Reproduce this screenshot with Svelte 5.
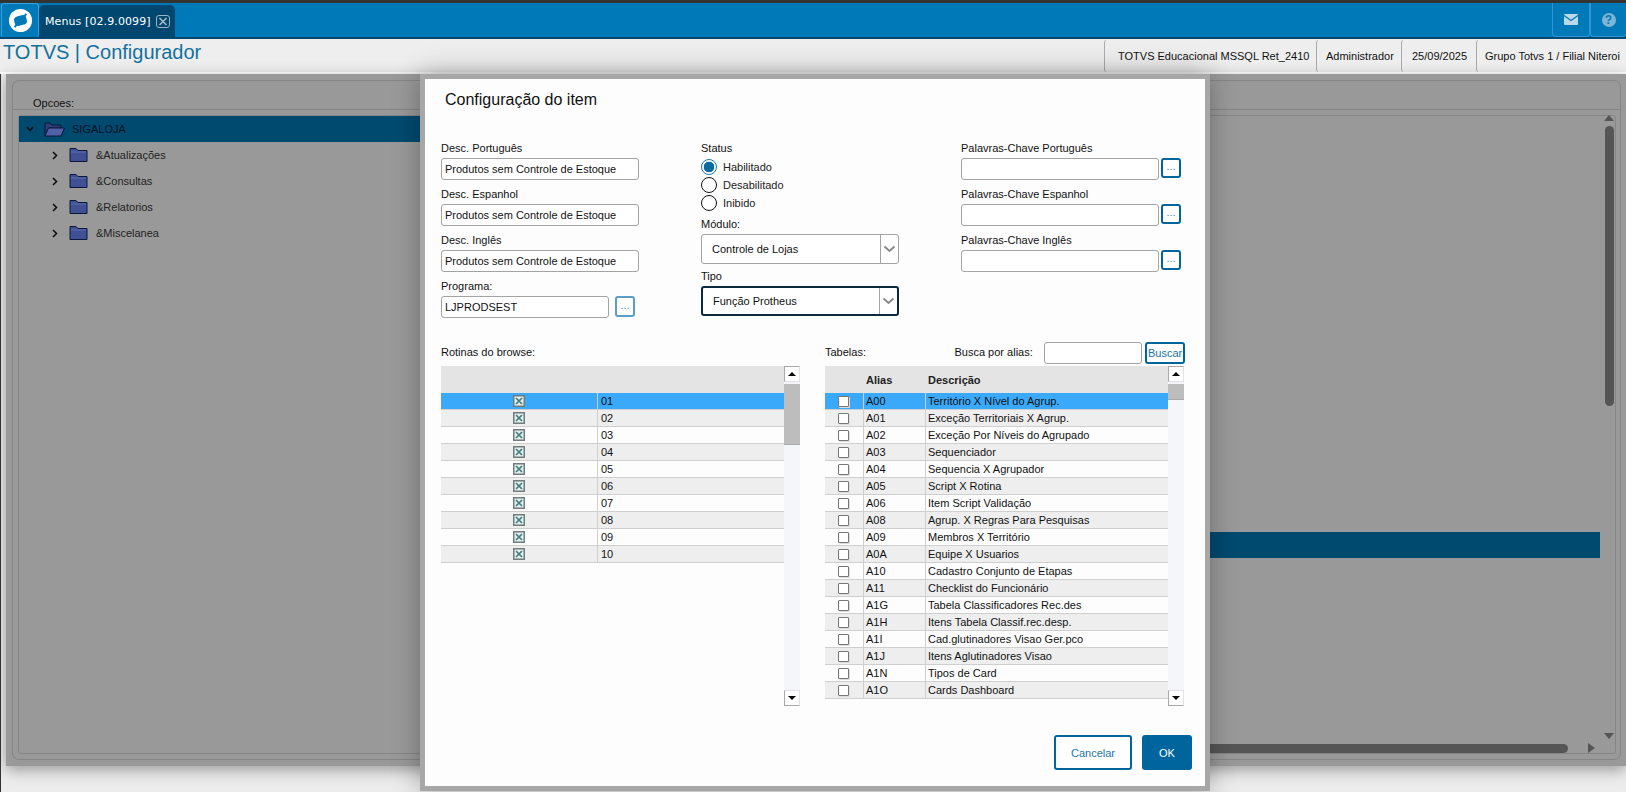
<script>
  const tree = ['&Atualizações', '&Consultas', '&Relatorios', '&Miscelanea'];
  const status = [
    { label: 'Habilitado', on: true },
    { label: 'Desabilitado', on: false },
    { label: 'Inibido', on: false }
  ];
  const descs = ['Desc. Português', 'Desc. Espanhol', 'Desc. Inglês'];
  const keys = ['Palavras-Chave Português', 'Palavras-Chave Espanhol', 'Palavras-Chave Inglês'];
  const rotinas = ['01', '02', '03', '04', '05', '06', '07', '08', '09', '10'];
  const tabelas = [
    ['A00', 'Território X Nível do Agrup.'],
    ['A01', 'Exceção Territoriais X Agrup.'],
    ['A02', 'Exceção Por Níveis do Agrupado'],
    ['A03', 'Sequenciador'],
    ['A04', 'Sequencia X Agrupador'],
    ['A05', 'Script X Rotina'],
    ['A06', 'Item Script Validação'],
    ['A08', 'Agrup. X Regras Para Pesquisas'],
    ['A09', 'Membros X Território'],
    ['A0A', 'Equipe X Usuarios'],
    ['A10', 'Cadastro Conjunto de Etapas'],
    ['A11', 'Checklist do Funcionário'],
    ['A1G', 'Tabela Classificadores Rec.des'],
    ['A1H', 'Itens Tabela Classif.rec.desp.'],
    ['A1I', 'Cad.glutinadores Visao Ger.pco'],
    ['A1J', 'Itens Aglutinadores Visao'],
    ['A1N', 'Tipos de Card'],
    ['A1O', 'Cards Dashboard']
  ];
</script>

<div class="page">
  <div class="topline"></div>
  <header class="topbar">
    <div class="logo">
      <svg width="25" height="25" viewBox="0 0 26 26">
        <circle cx="13" cy="13" r="12" fill="#fff" />
        <rect x="6.5" y="8" width="13" height="10" rx="4" fill="#0079b8" transform="rotate(-14 13 13)" />
        <path d="M17 9 L19 6 M9 17 L7 20" stroke="#0079b8" stroke-width="2" />
      </svg>
    </div>
    <div class="tab">
      <span>Menus [02.9.0099]</span>
      <svg class="tabclose" width="14" height="13" viewBox="0 0 14 13">
        <rect x="0.5" y="0.5" width="13" height="12" rx="2.5" fill="none" stroke="#9fb4c2" />
        <path d="M3.5 3 L10.5 10 M10.5 3 L3.5 10" stroke="#a9bac6" stroke-width="1.6" />
      </svg>
    </div>
    <div class="grow"></div>
    <div class="topbtn">
      <svg width="14" height="11" viewBox="0 0 14 11">
        <rect width="14" height="11" rx="1" fill="#bcd9ea" />
        <path d="M0 1.5 L7 6.5 L14 1.5" fill="none" stroke="#0079b8" stroke-width="1.3" />
      </svg>
    </div>
    <div class="topbtn last">
      <span class="help">?</span>
    </div>
  </header>

  <div class="infobar">
    <h1>TOTVS | Configurador</h1>
    <div class="seg first">TOTVS Educacional MSSQL Ret_2410</div>
    <div class="seg second">Administrador</div>
    <div class="seg third">25/09/2025</div>
    <div class="seg fourth">Grupo Totvs 1 / Filial Niteroi</div>
  </div>
  <div class="whitegap"></div>

  <main class="backdrop">
    <section class="panel">
      <div class="optlabel">Opcoes:</div>
      <div class="treebox">
        <div class="treerow selected">
          <svg class="chev" width="8" height="6" viewBox="0 0 8 6"><path d="M1 1 L4 4.5 L7 1" fill="none" stroke="#111" stroke-width="1.6" /></svg>
          <svg class="folder-open" width="21" height="15" viewBox="0 0 21 15">
            <path d="M1 14 V2 Q1 1 2 1 H6 L8 3 H17 V6 H5 Z" fill="#2f3d78" stroke="#0c1838" />
            <path d="M1 14 L4.5 6 H20.5 L17 14 Z" fill="#4f62a8" stroke="#0c1838" />
          </svg>
          <span class="rootname">SIGALOJA</span>
        </div>
        {#each tree as t}
          <div class="treerow">
            <svg class="chev child" width="6" height="9" viewBox="0 0 6 9"><path d="M1 1 L4.5 4.5 L1 8" fill="none" stroke="#111" stroke-width="1.6" /></svg>
            <svg class="folder" width="19" height="16" viewBox="0 0 19 16">
              <path d="M1 14.5 V1.5 H7 L9 3.5 H18 V14.5 Z" fill="#3f5095" stroke="#0c1838" />
              <path d="M2 5 H17" stroke="#5e6fb0" />
            </svg>
            <span>{t}</span>
          </div>
        {/each}
        <div class="treerow selected wide"></div>
      </div>
      <div class="vscroll">
        <span class="arrow-up"></span>
        <span class="vthumb"></span>
        <span class="arrow-down"></span>
      </div>
      <div class="hscroll">
        <span class="hthumb"></span>
        <span class="arrow-right"></span>
      </div>
    </section>
  </main>
  <div class="edge"></div>

  <div class="dialog">
    <h2>Configuração do item</h2>
    <div class="formgrid">
      <div class="col">
        {#each descs as d}
          <label class="field">
            <span class="lbl">{d}</span>
            <input class="txt" readonly value="Produtos sem Controle de Estoque" />
          </label>
        {/each}
        <label class="field">
          <span class="lbl">Programa:</span>
          <span class="inline wide-gap">
            <input class="txt short" readonly value="LJPRODSEST" />
            <button class="dots soft">...</button>
          </span>
        </label>
      </div>

      <div class="col">
        <span class="lbl">Status</span>
        {#each status as s}
          <div class="radiorow">
            <span class="radio" class:on={s.on}></span>
            <span>{s.label}</span>
          </div>
        {/each}
        <span class="lbl mt">Módulo:</span>
        <div class="select">
          <span class="seltext">Controle de Lojas</span>
          <span class="selarrow">
            <svg width="13" height="8" viewBox="0 0 13 8"><path d="M1.5 1.5 L6.5 6 L11.5 1.5" fill="none" stroke="#8a8a8a" stroke-width="2" /></svg>
          </span>
        </div>
        <span class="lbl mt">Tipo</span>
        <div class="select focus">
          <span class="seltext">Função Protheus</span>
          <span class="selarrow">
            <svg width="13" height="8" viewBox="0 0 13 8"><path d="M1.5 1.5 L6.5 6 L11.5 1.5" fill="none" stroke="#8a8a8a" stroke-width="2" /></svg>
          </span>
        </div>
      </div>

      <div class="col">
        {#each keys as k}
          <label class="field">
            <span class="lbl">{k}</span>
            <span class="inline">
              <input class="txt" readonly value="" />
              <button class="dots">...</button>
            </span>
          </label>
        {/each}
      </div>
    </div>

    <div class="tablegrid">
      <div>
        <div class="tablehead"><span class="lbl">Rotinas do browse:</span></div>
        <div class="tablewrap">
          <div class="grid">
            <div class="ghead"></div>
            {#each rotinas as r, i}
              <div class="row rot" class:active={i === 0} class:odd={i % 2 === 1}>
                <span class="cellc">
                  <svg width="12" height="12" viewBox="0 0 12 12">
                    <rect x="0.75" y="0.75" width="10.5" height="10.5" fill="#e6ecec" stroke="#6f7c80" stroke-width="1.5" />
                    <path d="M3 3 L9 9 M9 3 L3 9" stroke="#3f8080" stroke-width="1.7" />
                  </svg>
                </span>
                <span class="cell">{r}</span>
              </div>
            {/each}
          </div>
          <div class="sb">
            <span class="sbbtn"><i class="up"></i></span>
            <span class="sbthumb long"></span>
            <span class="sbspace"></span>
            <span class="sbbtn"><i class="down"></i></span>
          </div>
        </div>
      </div>

      <div>
        <div class="tablehead">
          <span class="lbl tabelas">Tabelas:</span>
          <span class="lbl busca">Busca por alias:</span>
          <input class="txt search" readonly value="" />
          <button class="buscar">Buscar</button>
        </div>
        <div class="tablewrap">
          <div class="grid">
            <div class="ghead tab3">
              <span></span>
              <b>Alias</b>
              <b>Descrição</b>
            </div>
            {#each tabelas as t, i}
              <div class="row tb" class:active={i === 0} class:odd={i % 2 === 1}>
                <span class="cellc"><span class="box"></span></span>
                <span class="cell">{t[0]}</span>
                <span class="cell">{t[1]}</span>
              </div>
            {/each}
          </div>
          <div class="sb">
            <span class="sbbtn"><i class="up"></i></span>
            <span class="sbthumb"></span>
            <span class="sbspace"></span>
            <span class="sbbtn"><i class="down"></i></span>
          </div>
        </div>
      </div>
    </div>

    <div class="footer">
      <button class="cancel">Cancelar</button>
      <button class="ok">OK</button>
    </div>
  </div>
</div>

<style>
  :global(body) { margin: 0; background: #f1f1f1; }
  .page {
    position: relative;
    width: 1626px;
    height: 792px;
    overflow: hidden;
    font-family: "Liberation Sans", Arial, sans-serif;
    font-size: 11px;
    color: #111;
    background: #ececec;
  }
  .topline { height: 3px; background: #333; }
  .topbar {
    display: flex;
    height: 34px;
    background: #0079b8;
    border-bottom: 2px solid #00486f;
  }
  .logo {
    width: 38px;
    margin-left: 1px;
    display: flex;
    align-items: center;
    justify-content: center;
    border: 1px solid #36a3e0;
    border-bottom: 0;
    border-radius: 3px;
    box-sizing: border-box;
  }
  .tab {
    width: 136px;
    margin-top: 2px;
    background: #00476f;
    border-radius: 5px 5px 0 0;
    display: flex;
    align-items: center;
    color: #fff;
    padding-left: 6px;
    box-sizing: border-box;
    font-family: "DejaVu Sans", Verdana, sans-serif;
    font-size: 11px;
    letter-spacing: 0.1px;
    white-space: nowrap;
  }
  .tabclose { margin-left: 5px; flex: none; }
  .grow { flex: 1; }
  .topbtn {
    width: 38px;
    display: flex;
    align-items: center;
    justify-content: center;
    border: 1px solid #2f96d3;
    border-top: 0;
    border-radius: 0 0 4px 4px;
    box-sizing: border-box;
  }
  .topbtn.last { width: 36px; border-right: 0; }
  .help {
    width: 14px;
    height: 14px;
    border-radius: 50%;
    background: #7eb4d4;
    color: #0079b8;
    font-weight: bold;
    font-size: 12px;
    line-height: 14px;
    text-align: center;
  }

  .infobar {
    display: flex;
    height: 33px;
    background: #eee;
    align-items: stretch;
  }
  .infobar h1 {
    margin: 0;
    font-size: 20px;
    font-weight: normal;
    color: #13719f;
    padding-left: 3px;
    line-height: 26px;
    flex: 1;
  }
  .seg {
    border-left: 1px solid #aaa;
    border-radius: 3px 0 0 3px;
    display: flex;
    align-items: center;
    padding-left: 13px;
    box-sizing: border-box;
    margin-top: 1px;
    white-space: nowrap;
  }
  .seg.first { width: 212px; }
  .seg.second { width: 85px; padding-left: 9px; }
  .seg.third { width: 75px; padding-left: 10px; }
  .seg.fourth { width: 150px; padding-left: 8px; }
  .whitegap { height: 2px; background: #fff; }

  .backdrop {
    margin-left: 6px;
    height: 692px;
    background: #999;
    padding: 6px;
    box-sizing: border-box;
    box-shadow: 0 4px 14px rgba(0, 0, 0, 0.35);
    position: relative;
  }
  .edge {
    position: absolute;
    left: 0;
    top: 74px;
    width: 1px;
    height: 718px;
    background: #333;
  }
  .panel {
    position: relative;
    width: 1609px;
    height: 680px;
    border: 1px solid #858585;
    border-radius: 7px;
    box-sizing: border-box;
    padding: 0 4px 4px 5px;
  }
  .optlabel {
    height: 29px;
    line-height: 45px;
    border-bottom: 1px solid #858585;
    margin: 0 -4px 5px -5px;
    padding-left: 20px;
    box-sizing: border-box;
  }
  .treebox {
    height: 639px;
    border: 1px solid #858585;
    border-radius: 3px;
    box-sizing: border-box;
  }
  .treerow {
    height: 26px;
    display: flex;
    align-items: center;
    padding-left: 32px;
    color: #222;
    position: relative;
  }
  .treerow.selected {
    background: #004a70;
    padding-left: 6px;
    color: #05121e;
    width: 1100px;
  }
  .treerow.wide {
    width: auto;
    margin: 286px 15px 0 1000px;
  }
  .chev { margin-right: 10px; margin-left: 1px; }
  .chev.child { margin-right: 11px; }
  .folder { margin-right: 8px; }
  .folder-open { margin-right: 7px; }

  .vscroll {
    position: absolute;
    left: 1589px;
    top: 34px;
    width: 14px;
    height: 624px;
    display: flex;
    flex-direction: column;
    align-items: center;
  }
  .arrow-up {
    width: 0; height: 0;
    border: 5px solid transparent;
    border-top: 0;
    border-bottom: 6px solid #555;
  }
  .vthumb {
    width: 9px;
    height: 280px;
    margin-top: 5px;
    background: #555;
    border-radius: 5px;
  }
  .arrow-down {
    margin-top: auto;
    width: 0; height: 0;
    border: 5px solid transparent;
    border-bottom: 0;
    border-top: 6px solid #555;
  }
  .hscroll {
    position: absolute;
    left: 1100px;
    top: 662px;
    width: 490px;
    height: 10px;
    display: flex;
    align-items: center;
  }
  .hthumb {
    width: 455px;
    height: 9px;
    background: #555;
    border-radius: 0 5px 5px 0;
  }
  .arrow-right {
    margin-left: 20px;
    width: 0; height: 0;
    border: 5px solid transparent;
    border-right: 0;
    border-left: 7px solid #555;
  }

  .dialog {
    position: absolute;
    left: 420px;
    top: 74px;
    width: 790px;
    height: 717px;
    border: 5px solid #a7a7a7;
    box-sizing: border-box;
    background: #fdfdfd;
    box-shadow: 0 0 26px rgba(0, 0, 0, 0.3);
    padding: 10px 0 0 16px;
  }
  .dialog h2 {
    margin: 0 0 27px 4px;
    height: 22px;
    line-height: 22px;
    font-size: 16px;
    font-weight: normal;
    color: #111;
  }
  .formgrid {
    display: grid;
    grid-template-columns: 260px 260px 240px;
    height: 180px;
    margin-bottom: 24px;
  }
  .col { display: flex; flex-direction: column; align-items: flex-start; }
  .field { display: block; margin-bottom: 4px; }
  .lbl { display: block; line-height: 20px; white-space: nowrap; }
  .lbl.mt { margin-top: 2px; }
  .txt {
    display: block;
    width: 198px;
    height: 22px;
    box-sizing: border-box;
    border: 1px solid #a3a3a3;
    border-radius: 3px;
    padding: 0 3px;
    font: 11px "Liberation Sans", Arial, sans-serif;
    color: #111;
    background: #fff;
    outline: none;
  }
  .txt.short { width: 168px; }
  .inline { display: flex; gap: 2px; align-items: flex-start; }
  .inline.wide-gap { gap: 6px; }
  .dots {
    width: 20px;
    height: 20px;
    padding: 0 0 3px;
    box-sizing: border-box;
    border: 2px solid #00659d;
    border-radius: 3px;
    background: #fff;
    color: #3d86b2;
    font: 11px "Liberation Sans", Arial, sans-serif;
    line-height: 1;
  }
  .dots.soft { border-color: #5b9dc4; height: 21px; }

  .radiorow {
    display: flex;
    align-items: center;
    height: 18px;
    gap: 6px;
    color: #222;
  }
  .radio {
    width: 16px;
    height: 16px;
    box-sizing: border-box;
    border: 1px solid #111;
    border-radius: 50%;
    background: #fff;
  }
  .radio.on {
    border-color: #1276ad;
    background: radial-gradient(circle, #0a6aa1 0 5px, #fff 5.6px);
  }
  .select {
    width: 198px;
    height: 30px;
    box-sizing: border-box;
    border: 1px solid #a3a3a3;
    border-radius: 3px;
    display: flex;
    align-items: center;
    background: #fff;
  }
  .select.focus { border: 2px solid #0b2a3e; }
  .seltext { flex: 1; padding-left: 10px; color: #111; }
  .selarrow {
    width: 17px;
    height: 100%;
    border-left: 1px solid #a3a3a3;
    display: flex;
    align-items: center;
    justify-content: center;
  }

  .tablegrid {
    display: grid;
    grid-template-columns: 359px 360px;
    column-gap: 25px;
  }
  .tablehead {
    display: flex;
    height: 24px;
    align-items: flex-start;
  }
  .tabelas { width: 130px; }
  .busca { width: 90px; }
  .search { width: 98px; }
  .buscar {
    width: 40px;
    height: 22px;
    margin-left: 3px;
    box-sizing: border-box;
    border: 2px solid #00659d;
    border-radius: 3px;
    background: #fff;
    color: #1a76a8;
    padding: 0;
    font: 11px "Liberation Sans", Arial, sans-serif;
  }
  .tablewrap { display: flex; height: 340px; }
  .grid { width: 343px; }
  .ghead {
    height: 27px;
    background: #e4e4e4;
  }
  .ghead.tab3 {
    display: grid;
    grid-template-columns: 38px 62px 1fr;
    align-items: center;
    color: #222;
  }
  .ghead.tab3 b { padding-left: 3px; }
  .row {
    display: grid;
    height: 17px;
    box-sizing: border-box;
    border-bottom: 1px solid #cfcfcf;
    background: #fdfdfd;
  }
  .row.rot { grid-template-columns: 156px 1fr; }
  .row.tb { grid-template-columns: 38px 62px 1fr; }
  .row.odd { background: #eee; }
  .row.active { background: #3aa9fa; }
  .cellc {
    display: flex;
    align-items: center;
    justify-content: center;
    padding-right: 1px;
  }
  .cell {
    border-left: 1px solid #cfcfcf;
    padding-left: 3px;
    line-height: 16px;
    white-space: nowrap;
    overflow: hidden;
  }
  .row.tb .cell { padding-left: 2px; }
  .box {
    width: 11px;
    height: 11px;
    box-sizing: border-box;
    border: 1px solid #777;
    border-radius: 1px;
    background: #fff;
    box-shadow: 1px 1px 0 #ddd;
  }
  .sb {
    width: 16px;
    background: #f5f6fa;
    display: flex;
    flex-direction: column;
  }
  .sbbtn {
    height: 16px;
    background: #fff;
    border: 1px solid #a9a9a9;
    border-right-color: #e2e2e2;
    border-bottom-color: #e2e2e2;
    box-sizing: border-box;
    display: flex;
    align-items: center;
    justify-content: center;
  }
  .sbbtn:last-child {
    border-top-color: #e2e2e2;
    border-bottom-color: #a9a9a9;
  }
  .up {
    width: 0; height: 0;
    border: 4px solid transparent;
    border-top: 0;
    border-bottom: 4px solid #000;
  }
  .down {
    width: 0; height: 0;
    border: 4px solid transparent;
    border-bottom: 0;
    border-top: 4px solid #000;
  }
  .sbthumb {
    height: 15px;
    margin-top: 2px;
    background: #bdbdbd;
    border-bottom: 1px solid #a8a8a8;
  }
  .sbthumb.long { height: 60px; }
  .sbspace { flex: 1; }

  .footer {
    position: absolute;
    right: 13px;
    bottom: 16px;
    display: flex;
    gap: 10px;
  }
  .footer button {
    height: 35px;
    box-sizing: border-box;
    border-radius: 3px;
    font: 11px "Liberation Sans", Arial, sans-serif;
    padding: 0;
  }
  .cancel {
    width: 78px;
    border: 2px solid #00659d;
    background: #fff;
    color: #1a76a8;
  }
  .ok {
    width: 50px;
    border: 0;
    background: #00659d;
    color: #fff;
  }
</style>
